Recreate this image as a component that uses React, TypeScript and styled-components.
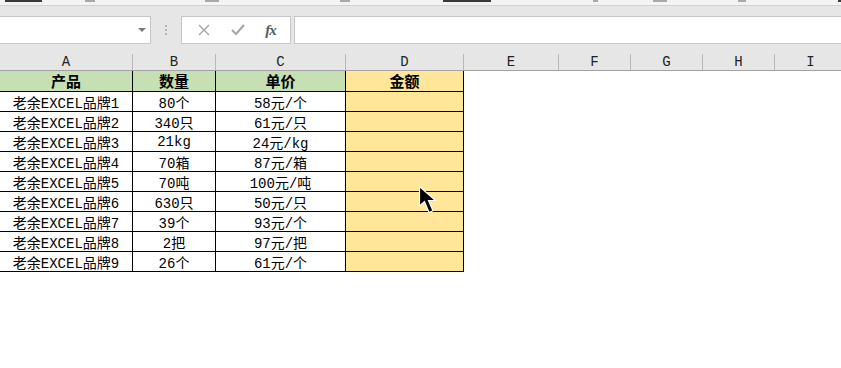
import styled, { createGlobalStyle } from "styled-components";

const GlobalStyle = createGlobalStyle`
  html, body {
    margin: 0;
    padding: 0;
    background: #fff;
  }
  body {
    font-family: "Liberation Mono", "Noto Sans CJK SC", monospace;
    overflow: hidden;
  }
`;

const COLUMNS = [
  { label: "A", width: 133 },
  { label: "B", width: 83 },
  { label: "C", width: 130 },
  { label: "D", width: 118 },
  { label: "E", width: 95 },
  { label: "F", width: 72 },
  { label: "G", width: 72 },
  { label: "H", width: 72 },
  { label: "I", width: 72 },
];

const HEAD = ["产品", "数量", "单价", "金额"];

const ROWS = [
  ["老余EXCEL品牌1", "80个", "58元/个"],
  ["老余EXCEL品牌2", "340只", "61元/只"],
  ["老余EXCEL品牌3", "21kg", "24元/kg"],
  ["老余EXCEL品牌4", "70箱", "87元/箱"],
  ["老余EXCEL品牌5", "70吨", "100元/吨"],
  ["老余EXCEL品牌6", "630只", "50元/只"],
  ["老余EXCEL品牌7", "39个", "93元/个"],
  ["老余EXCEL品牌8", "2把", "97元/把"],
  ["老余EXCEL品牌9", "26个", "61元/个"],
];

// bits of ribbon group captions that peek out at the very top
const RIBBON_BITS = [
  { gap: 5, w: 37, dark: true },
  { gap: 43, w: 10, dark: false },
  { gap: 110, w: 14, dark: false },
  { gap: 121, w: 10, dark: false },
  { gap: 93, w: 48, dark: true },
  { gap: 102, w: 5, dark: false },
  { gap: 55, w: 14, dark: false },
  { gap: 71, w: 8, dark: false },
  { gap: 92, w: 3, dark: true },
];

const Window = styled.div`
  position: relative;
  width: 841px;
  height: 368px;
  overflow: hidden;
  background: #fff;
`;

const RibbonEdge = styled.div`
  display: flex;
  height: 5px;
  background: #f3f3f3;
  border-bottom: 1px solid #d2d2d2;
`;

const RibbonBit = styled.span<{ $gap: number; $w: number; $dark: boolean }>`
  margin-left: ${({ $gap }) => $gap}px;
  width: ${({ $w }) => $w}px;
  height: 2px;
  background: ${({ $dark }) => ($dark ? "#3a3a3a" : "#a8a8a8")};
`;

const FormulaBar = styled.div`
  display: flex;
  align-items: stretch;
  height: 38px;
  padding-top: 10px;
  box-sizing: border-box;
  background: #e6e6e6;
`;

const Field = styled.div`
  display: flex;
  align-items: center;
  height: 28px;
  box-sizing: border-box;
  background: #fff;
  border: 1px solid #c6c6c6;
`;

const NameBox = styled(Field)`
  width: 152px;
  margin-left: -1px;
  justify-content: flex-end;
  padding-right: 4px;
`;

const DropArrow = styled.span`
  width: 0;
  height: 0;
  border-left: 4px solid transparent;
  border-right: 4px solid transparent;
  border-top: 4px solid #7a7a7a;
`;

const Grip = styled.div`
  display: flex;
  flex-direction: column;
  justify-content: center;
  gap: 2px;
  width: 30px;
  align-items: center;
  span {
    width: 2px;
    height: 2px;
    background: #b5b5b5;
  }
`;

const FuncBox = styled(Field)`
  width: 110px;
  justify-content: space-around;
  padding: 0 4px 0 6px;
`;

const FxLabel = styled.span`
  font-family: "Liberation Serif", serif;
  font-style: italic;
  font-weight: 700;
  font-size: 15px;
  color: #5a5a5a;
  letter-spacing: -1px;
`;

const FormulaInput = styled(Field)`
  flex: 1;
  margin-left: 3px;
  margin-right: -1px;
`;

const ColumnHeader = styled.div`
  display: flex;
  align-items: flex-end;
  height: 27px;
  box-sizing: border-box;
  background: #e6e6e6;
  border-bottom: 1px solid #a3a3a3;
`;

const ColLabel = styled.div<{ $w: number }>`
  flex: 0 0 ${({ $w }) => $w}px;
  height: 16px;
  box-sizing: border-box;
  border-right: 1px solid #b8b8b8;
  text-align: center;
  font-size: 14px;
  line-height: 16px;
  color: #222;
`;

const Row = styled.div<{ $h: number }>`
  display: flex;
  height: ${({ $h }) => $h}px;
`;

const Cell = styled.div<{ $w: number; $fill?: string; $bold?: boolean }>`
  flex: 0 0 ${({ $w }) => $w}px;
  box-sizing: border-box;
  display: flex;
  align-items: center;
  justify-content: center;
  border-right: 1px solid #000;
  border-bottom: 1px solid #000;
  background: ${({ $fill }) => $fill ?? "#fff"};
  font-size: ${({ $bold }) => ($bold ? 15 : 14)}px;
  font-weight: ${({ $bold }) => ($bold ? 700 : 400)};
  color: #000;
  white-space: nowrap;
`;

const Pointer = styled.svg`
  position: absolute;
  left: 418px;
  top: 185px;
`;

const GREEN = "#c6e0b4";
const YELLOW = "#ffe699";

export default function App() {
  const widths = COLUMNS.map((c) => c.width);

  return (
    <Window>
      <GlobalStyle />
      <RibbonEdge>
        {RIBBON_BITS.map((b, i) => (
          <RibbonBit key={i} $gap={b.gap} $w={b.w} $dark={b.dark} />
        ))}
      </RibbonEdge>

      <FormulaBar>
        <NameBox>
          <DropArrow />
        </NameBox>
        <Grip>
          <span />
          <span />
          <span />
        </Grip>
        <FuncBox>
          <svg width="12" height="12" viewBox="0 0 12 12">
            <path d="M1 1 L11 11 M11 1 L1 11" stroke="#a6a6a6" strokeWidth="1.4" />
          </svg>
          <svg width="14" height="12" viewBox="0 0 14 12">
            <path d="M1 6 L5 10 L13 1" stroke="#a6a6a6" strokeWidth="2" fill="none" />
          </svg>
          <FxLabel>fx</FxLabel>
        </FuncBox>
        <FormulaInput />
      </FormulaBar>

      <ColumnHeader>
        {COLUMNS.map((c) => (
          <ColLabel key={c.label} $w={c.width}>
            {c.label}
          </ColLabel>
        ))}
      </ColumnHeader>

      <Row $h={21}>
        {HEAD.map((h, i) => (
          <Cell key={h} $w={widths[i]} $fill={i === 3 ? YELLOW : GREEN} $bold>
            {h}
          </Cell>
        ))}
      </Row>
      {ROWS.map((r) => (
        <Row key={r[0]} $h={20}>
          {r.map((v, i) => (
            <Cell key={i} $w={widths[i]}>
              {v}
            </Cell>
          ))}
          <Cell $w={widths[3]} $fill={YELLOW} />
        </Row>
      ))}

      <Pointer width="20" height="32" viewBox="0 0 20 32">
        <path
          d="M1.5 1.5 L1.5 21 L6.5 16.5 L11 27.5 L15 25.8 L10.5 15.5 L17.5 15.5 Z"
          fill="#000"
          stroke="#fff"
          strokeWidth="1.2"
          strokeLinejoin="miter"
        />
      </Pointer>
    </Window>
  );
}
